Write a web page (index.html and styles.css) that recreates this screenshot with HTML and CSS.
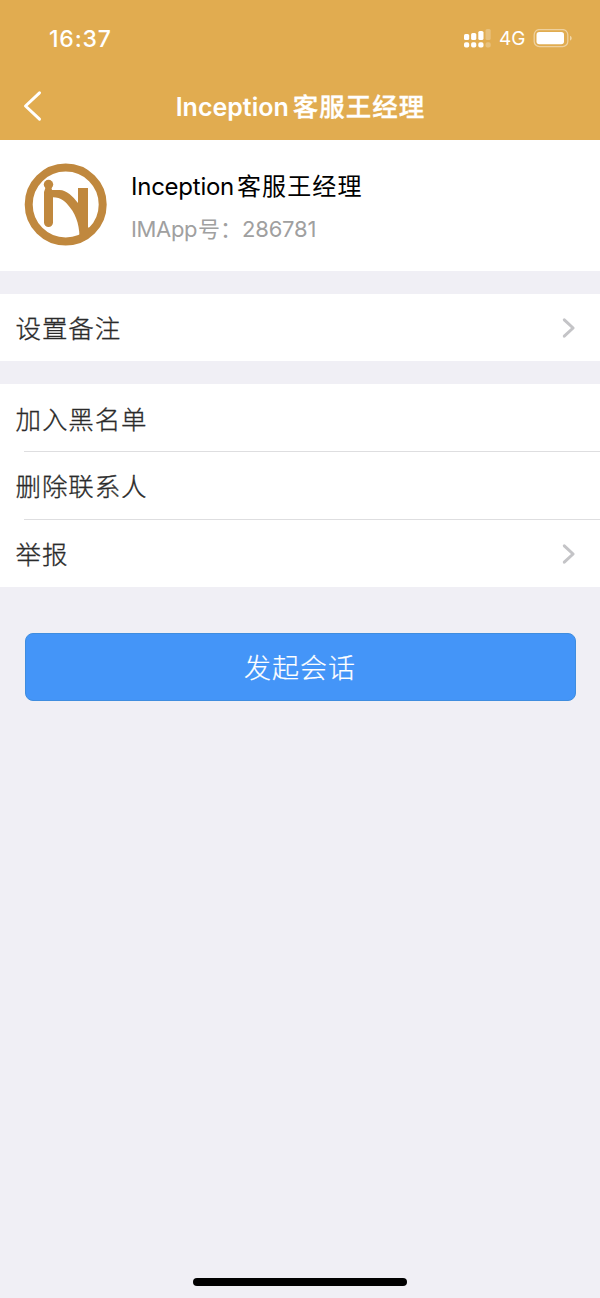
FILE: index.html
```html
<!DOCTYPE html>
<html lang="zh-CN">
<head>
<meta charset="utf-8">
<title>Inception客服王经理</title>
<link rel="stylesheet" href="styles.css">
</head>
<body>
<div class="screen">
  <header class="header">
    <div class="status">
      <span class="time">16:37</span>
      <div class="status-right">
        <svg class="signal" width="28" height="20" viewBox="0 0 28 20" fill="#fff">
          <rect x="0" y="5" width="5.2" height="6" rx="1.6"/>
          <rect x="7.1" y="4" width="5.2" height="7" rx="1.6"/>
          <rect x="14.300" y="2" width="5.2" height="9" rx="1.6"/>
          <rect x="21.500" y="0" width="5.2" height="11" rx="1.6" opacity=".25"/>
          <rect x="0" y="13.3" width="5.2" height="5.3" rx="1.8"/>
          <rect x="7.1" y="13.3" width="5.2" height="5.3" rx="1.8"/>
          <rect x="14.300" y="13.3" width="5.2" height="5.3" rx="1.8"/>
          <rect x="21.500" y="13.3" width="5.2" height="5.3" rx="1.8" opacity=".25"/>
        </svg>
        <span class="network">4G</span>
        <svg class="battery" width="40" height="20" viewBox="0 0 40 20" fill="none">
          <rect x="1.2" y=".6" width="33.6" height="17" rx="5.2" stroke="#fff" stroke-opacity=".45" stroke-width="1.3"/>
          <rect x="3.5" y="3.1" width="27.5" height="12.2" rx="2.8" fill="#fff"/>
          <path d="M37 6.700c2.3.8 2.3 4 0 4.8z" fill="#fff" fill-opacity=".5"/>
        </svg>
      </div>
    </div>
    <div class="nav">
      <svg class="back" width="20" height="32" viewBox="0 0 20 32" fill="none" stroke="#fff" stroke-width="3" stroke-linecap="round" stroke-linejoin="round"><path d="M16.5 2.8 2.5 16l14 13.2"/></svg>
      <h1 class="title"><span class="title-latin">Inception</span><span class="title-cjk">客服王经理</span></h1>
    </div>
  </header>

  <section class="profile">
    <svg class="avatar" width="84" height="84" viewBox="0 0 84 84" fill="none">
      <circle cx="41.7" cy="41.5" r="37" stroke="#c0883e" stroke-width="8"/>
      <circle cx="24.5" cy="21.5" r="4.7" fill="#c0883e"/>
      <path d="M22 23h5l1 4h7.5c7.5.3 13 6 18.500 13V25h10v39.500h4L60 78h-4.500c.5-13-2.500-25-9.500-33.500C42 39 37 34.300 29 34.300v25.200a4.500 4.500 0 0 1-9 0V29z" fill="#c0883e"/>
    </svg>
    <div class="profile-text">
      <div class="name"><span class="name-latin">Inception</span><span class="name-cjk">客服王经理</span></div>
      <div class="account"><span class="account-label">IMApp</span><span class="account-cjk">号：</span><span class="account-number">286781</span></div>
    </div>
  </section>

  <section class="group">
    <div class="row"><span class="label">设置备注</span><svg class="chevron" width="14" height="22" viewBox="0 0 14 22"><path d="m2.3 2.8 8.8 8.2-8.8 8.2"/></svg></div>
  </section>

  <section class="group">
    <div class="row"><span class="label">加入黑名单</span></div>
    <div class="row divided"><span class="label">删除联系人</span></div>
    <div class="row divided"><span class="label">举报</span><svg class="chevron" width="14" height="22" viewBox="0 0 14 22"><path d="m2.3 2.8 8.8 8.2-8.8 8.2"/></svg></div>
  </section>

  <button class="start" type="button">发起会话</button>
  <div class="home-indicator"></div>
</div>
</body>
</html>
```
FILE: styles.css
```css
* { box-sizing: border-box; }
body { margin: 0; }
.screen {
  display: flex;
  flex-direction: column;
  width: 600px;
  height: 1298px;
  background: #f0eff5;
  font-family: Inter, "Noto Sans CJK SC", sans-serif;
  color: #2b2b2b;
}
.header {
  height: 140px;
  background: #e1ac50;
  color: #fff;
}
.status {
  display: flex;
  align-items: center;
  justify-content: space-between;
  height: 76px;
  padding: 0 27px 0 49px;
}
.time { padding-top: 1px; font-size: 23px; font-weight: 500; letter-spacing: .8px; }
.status-right { display: flex; align-items: center; padding-top: 1px; }
.network { margin: 1px 0 0 7px; width: 34px; font-size: 19px; line-height: 20px; }
.nav {
  display: grid;
  grid-template-columns: 60px 1fr 60px;
  align-items: center;
  height: 60px;
}
.back { margin-left: 23px; }
.title {
  display: flex;
  justify-content: center;
  align-items: baseline;
  gap: 4px;
  margin: 0;
  line-height: 38px;
  padding-bottom: 1px;
  font-size: 25px;
  font-weight: 600;
  white-space: nowrap;
}
.title-latin { font-size: 25px; letter-spacing: 0; }
.title-cjk {
  margin-right: -1px;
  font-family: "Noto Sans CJK SC", sans-serif;
  font-size: 25.5px;
  font-weight: 500;
  letter-spacing: 1px;
  -webkit-text-stroke: .3px currentColor;
}
.profile {
  display: flex;
  gap: 23px;
  height: 130.5px;
  padding: 23px 24px 0;
  background: #fff;
}
.profile-text { padding-top: 1px; }
.name, .account {
  display: flex;
  align-items: baseline;
  height: 42px;
  line-height: 42px;
  white-space: nowrap;
}
.name { color: #000; font-size: 24px; }
.name-latin { width: 106px; letter-spacing: -.25px; }
.name-cjk { font-family: "Noto Sans CJK SC", sans-serif; font-size: 24px; letter-spacing: 1.1px; }
.account { color: #a0a0a0; font-size: 22px; }
.account-label { width: 67px; letter-spacing: -.35px; }
.account-cjk { width: 44px; font-family: "Noto Sans CJK SC", sans-serif; font-size: 22px; }
.account-number { letter-spacing: -.2px; }
.group { margin-top: 23px; background: #fff; }
.row {
  position: relative;
  display: flex;
  align-items: center;
  justify-content: space-between;
  height: 67.7px;
  padding: 0 24px 0 15.5px;
  font: 300 25.5px "Noto Sans CJK SC", sans-serif;
  letter-spacing: .9px;
  -webkit-text-stroke: .3px currentColor;
}
.label { padding-bottom: 2px; }
.divided::before {
  content: "";
  position: absolute;
  top: -1px;
  left: 24px;
  right: 0;
  height: 1px;
  background: #dedee0;
}
.chevron { margin-top: 1px; fill: none; stroke: #c4c4c7; stroke-width: 3; stroke-linecap: round; stroke-linejoin: round; }
.start {
  height: 68px;
  margin: 45.5px 24.5px 0;
  padding: 0 0 1px;
  border: 1px solid #3f8ddf;
  border-radius: 8px;
  background: #4495f8;
  color: #fff;
  font: 300 27px "Noto Sans CJK SC", sans-serif;
  letter-spacing: 1px;
  -webkit-text-stroke: .2px currentColor;
}
.home-indicator {
  width: 214px;
  height: 8px;
  margin: auto auto 12px;
  border-radius: 4px;
  background: #000;
}
```
